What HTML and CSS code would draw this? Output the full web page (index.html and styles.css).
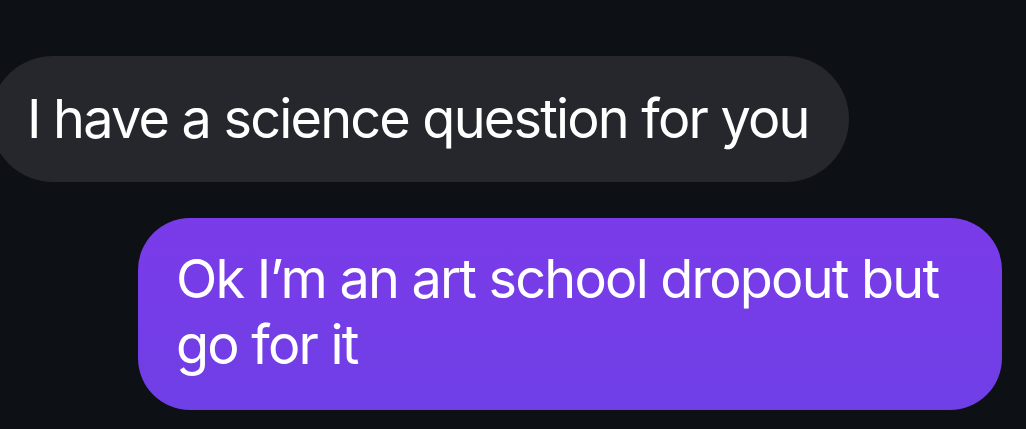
FILE: index.html
```html
<!DOCTYPE html>
<html>
<head>
<meta charset="utf-8">
<link rel="stylesheet" href="styles.css">
</head>
<body>
<div class="thread">
  <div class="row row-in">
    <div class="bubble bubble-in">I have a science question for you</div>
  </div>
  <div class="row row-out">
    <div class="bubble bubble-out">Ok I’m an art school dropout but go for it</div>
  </div>
</div>
</body>
</html>
```
FILE: styles.css
```css
html, body {
  margin: 0;
  padding: 0;
  background: #0d1014;
  width: 1026px;
  height: 429px;
  overflow: hidden;
}
.thread {
  display: flex;
  flex-direction: column;
  padding-top: 56px;
  gap: 36px;
  font-family: Inter, "Noto Sans", sans-serif;
  color: #ffffff;
}
.row {
  display: flex;
}
.row-in {
  justify-content: flex-start;
  margin-left: -10px;
}
.row-out {
  justify-content: flex-end;
  padding-right: 24px;
}
.bubble {
  font-size: 54px;
  line-height: 66px;
  letter-spacing: -1.8px;
  box-sizing: border-box;
}
.bubble-in {
  background: #25272c;
  height: 126px;
  padding: 30px 40px 30px 37px;
  border-radius: 63px;
}
.bubble-out {
  background: linear-gradient(180deg, #7a3be8 0%, #6f3fe6 100%);
  width: 864px;
  padding: 28px 38px 32px 38px;
  border-radius: 52px;
}
```
